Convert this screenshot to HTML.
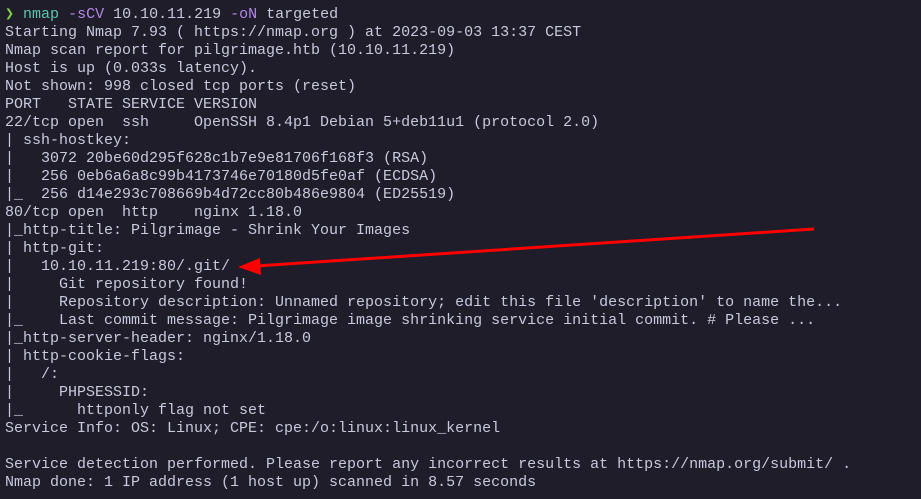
<!DOCTYPE html>
<html><head><style>
body{margin:0;background:#1e1d29;width:921px;height:499px;overflow:hidden;position:relative}
pre{margin:0;position:absolute;left:5px;top:6px;font-family:"Liberation Mono","DejaVu Sans Mono",monospace;font-size:15px;line-height:18px;color:#c8c9dd}
.g{color:#7fd14a}.t{color:#5cc7ad}.p{color:#b487e6}
</style></head><body>
<pre><span class="g">❯</span> <span class="t">nmap</span> <span class="p">-sCV</span> 10.10.11.219 <span class="p">-oN</span> targeted
Starting Nmap 7.93 ( https://nmap.org ) at 2023-09-03 13:37 CEST
Nmap scan report for pilgrimage.htb (10.10.11.219)
Host is up (0.033s latency).
Not shown: 998 closed tcp ports (reset)
PORT   STATE SERVICE VERSION
22/tcp open  ssh     OpenSSH 8.4p1 Debian 5+deb11u1 (protocol 2.0)
| ssh-hostkey: 
|   3072 20be60d295f628c1b7e9e81706f168f3 (RSA)
|   256 0eb6a6a8c99b4173746e70180d5fe0af (ECDSA)
|_  256 d14e293c708669b4d72cc80b486e9804 (ED25519)
80/tcp open  http    nginx 1.18.0
|_http-title: Pilgrimage - Shrink Your Images
| http-git: 
|   10.10.11.219:80/.git/
|     Git repository found!
|     Repository description: Unnamed repository; edit this file 'description' to name the...
|_    Last commit message: Pilgrimage image shrinking service initial commit. # Please ...
|_http-server-header: nginx/1.18.0
| http-cookie-flags: 
|   /: 
|     PHPSESSID: 
|_      httponly flag not set
Service Info: OS: Linux; CPE: cpe:/o:linux:linux_kernel

Service detection performed. Please report any incorrect results at https://nmap.org/submit/ .
Nmap done: 1 IP address (1 host up) scanned in 8.57 seconds</pre>
<svg width="921" height="499" style="position:absolute;left:0;top:0">
<line x1="814" y1="229" x2="256" y2="266" stroke="#f00" stroke-width="3"/>
<polygon points="238,267 260,258 261,275" fill="#f00"/>
</svg>
</body></html>
